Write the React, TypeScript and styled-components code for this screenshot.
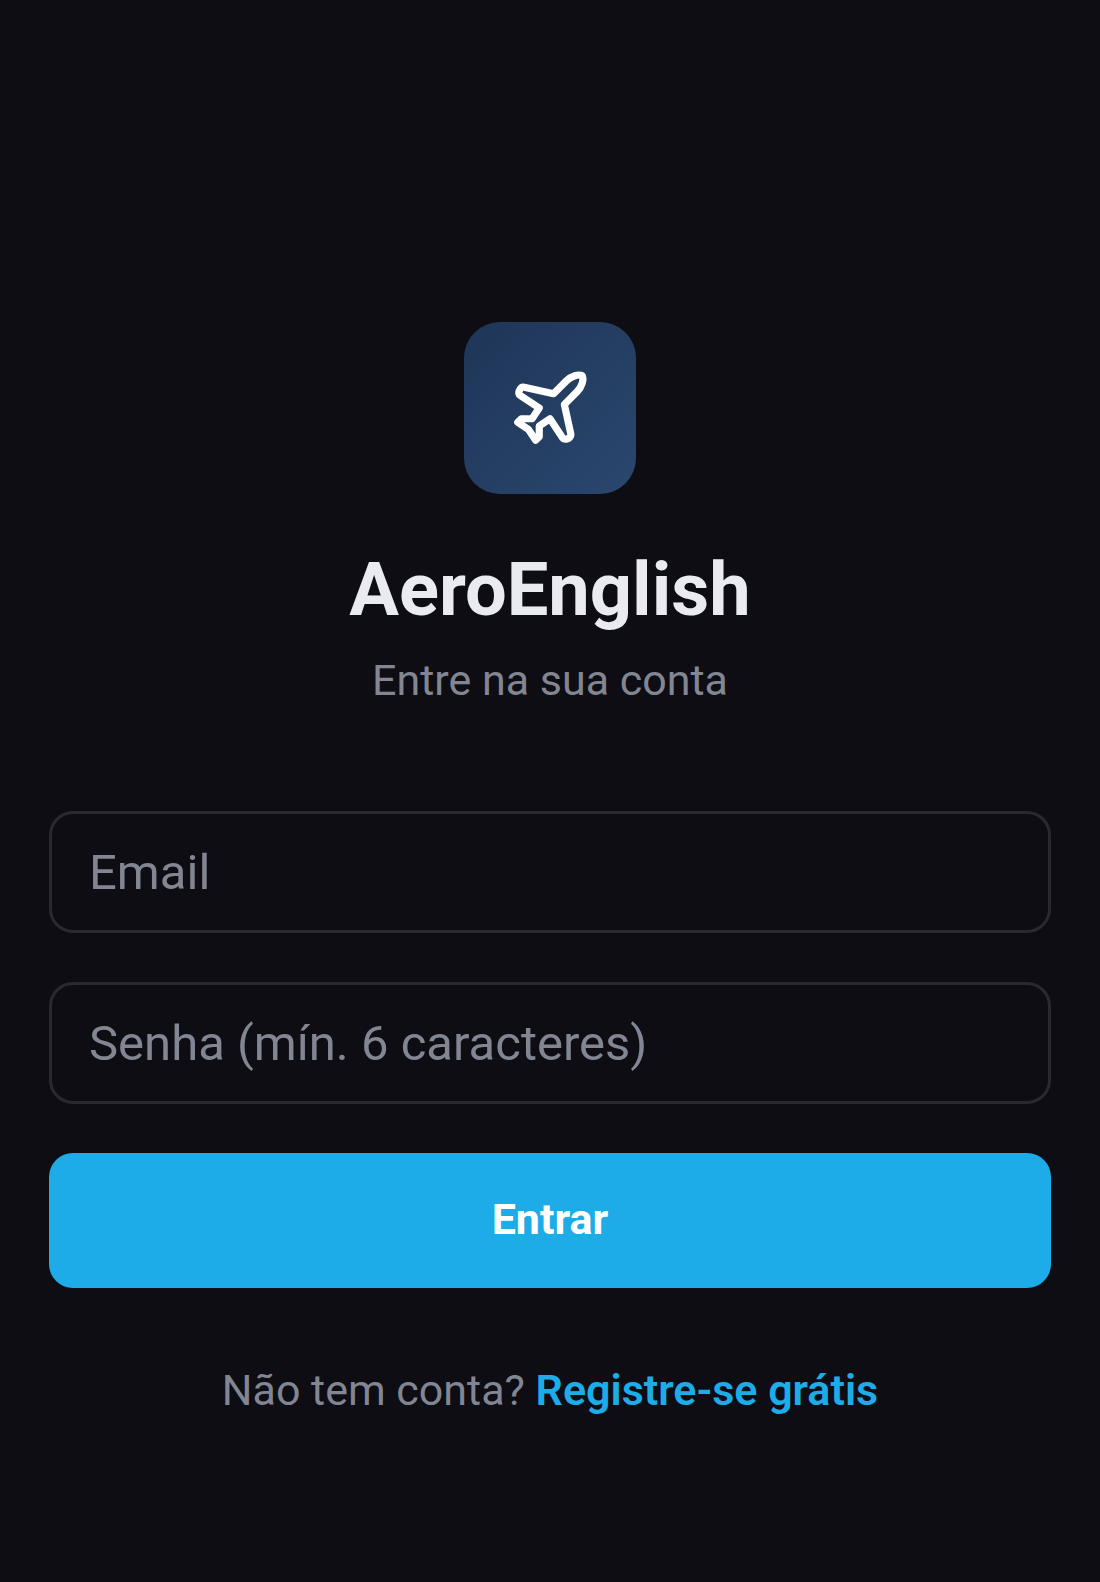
import React, { useState } from "react";
import styled, { createGlobalStyle } from "styled-components";
import { Plane } from "lucide-react";

const GlobalStyle = createGlobalStyle`
  *, *::before, *::after { box-sizing: border-box; }
  body { margin: 0; background: #0e0d14; font-family: Roboto, "Liberation Sans", sans-serif; }
`;

const Page = styled.main`
  min-height: 100vh;
  display: flex;
  flex-direction: column;
  justify-content: center;
  padding: 210px 49px 49px;
  color: #eaeaf1;
`;

const Header = styled.header`
  display: flex;
  flex-direction: column;
  align-items: center;
  margin-bottom: 98px;
`;

const Logo = styled.div`
  display: flex;
  align-items: center;
  justify-content: center;
  width: 172px;
  height: 172px;
  margin-bottom: 48px;
  border-radius: 36px;
  color: #ffffff;
  background: linear-gradient(135deg, #1e3557, #2b476e);
`;

const Title = styled.h1`
  margin: 0;
  font-size: 74px;
  line-height: 96px;
  font-weight: 700;
`;

const Subtitle = styled.p`
  margin: 12px 0 0;
  padding-bottom: 2px;
  font-size: 43px;
  line-height: 61px;
  color: #828692;
`;

const Form = styled.form`
  display: flex;
  flex-direction: column;
  gap: 49px;
`;

const Field = styled.input`
  width: 100%;
  height: 122px;
  padding: 0 37px;
  border: 3px solid #2a2932;
  border-radius: 24px;
  background: transparent;
  color: #eaeaf1;
  font-family: inherit;
  font-size: 49px;
  outline: none;

  &::placeholder { color: #828692; opacity: 1; }
  &:focus { border-color: #1dace7; }
`;

const Submit = styled.button`
  height: 135px;
  padding: 0 24px 4px;
  border: 0;
  border-radius: 24px;
  background: #1dace7;
  color: #ffffff;
  font-family: inherit;
  font-size: 43px;
  font-weight: 700;
  cursor: pointer;
`;

const Footer = styled.p`
  margin: 72px 0 0;
  text-align: center;
  font-size: 43px;
  line-height: 61px;
  color: #828692;
`;

const RegisterLink = styled.a`
  color: #1dace7;
  font-weight: 600;
  text-decoration: none;
`;

export default function App() {
  const [email, setEmail] = useState("");
  const [password, setPassword] = useState("");

  return (
    <>
      <GlobalStyle />
      <Page>
        <Header>
          <Logo>
            <Plane size={86} strokeWidth={2} aria-hidden="true" />
          </Logo>
          <Title>AeroEnglish</Title>
          <Subtitle>Entre na sua conta</Subtitle>
        </Header>
        <Form onSubmit={(event) => event.preventDefault()}>
          <Field
            type="email"
            aria-label="Email"
            placeholder="Email"
            value={email}
            onChange={(event) => setEmail(event.target.value)}
          />
          <Field
            type="password"
            aria-label="Senha"
            placeholder="Senha (mín. 6 caracteres)"
            minLength={6}
            value={password}
            onChange={(event) => setPassword(event.target.value)}
          />
          <Submit type="submit">Entrar</Submit>
        </Form>
        <Footer>
          Não tem conta? <RegisterLink href="#registro">Registre-se grátis</RegisterLink>
        </Footer>
      </Page>
    </>
  );
}
